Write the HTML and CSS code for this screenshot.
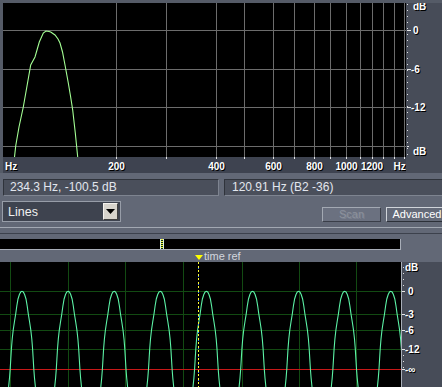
FILE: index.html
```html
<!DOCTYPE html>
<html>
<head>
<meta charset="utf-8">
<link rel="stylesheet" href="styles.css">
</head>
<body>
<div class="app">
  <div class="spectrum">
    <div class="plotcol">
      <svg class="plot" width="403" height="154" viewBox="3 3 403 154">
        <g class="grid">
          <line x1="3" y1="30.5" x2="406" y2="30.5"/>
          <line x1="3" y1="69.5" x2="406" y2="69.5"/>
          <line x1="3" y1="107.5" x2="406" y2="107.5"/>
          <line x1="3" y1="146.5" x2="406" y2="146.5"/>
          <line x1="116.5" y1="3" x2="116.5" y2="157"/>
          <line x1="166.5" y1="3" x2="166.5" y2="157"/>
          <line x1="216.5" y1="3" x2="216.5" y2="157"/>
          <line x1="244.5" y1="3" x2="244.5" y2="157"/>
          <line x1="273.5" y1="3" x2="273.5" y2="157"/>
          <line x1="294.5" y1="3" x2="294.5" y2="157"/>
          <line x1="314.5" y1="3" x2="314.5" y2="157"/>
          <line x1="330.5" y1="3" x2="330.5" y2="157"/>
          <line x1="346.5" y1="3" x2="346.5" y2="157"/>
          <line x1="360.5" y1="3" x2="360.5" y2="157"/>
          <line x1="372.5" y1="3" x2="372.5" y2="157"/>
          <line x1="383.5" y1="3" x2="383.5" y2="157"/>
          <line x1="394.5" y1="3" x2="394.5" y2="157"/>
          <line x1="404.5" y1="3" x2="404.5" y2="157"/>
        </g>
        <polyline class="curve" points="14.5,157 15.7,146 19,127 23.3,107 27,86 30.7,65 35,57 39.3,42 43.3,33 46,31 49,31.5 50.7,32 55,35 58,39 60,43 62.5,52 65,65 68.3,83 70.5,96 72.7,110 75.3,133 77.7,157"/>
      </svg>
      <svg class="xaxis" width="403" height="16" viewBox="3 157 403 16">
        <g class="ticks">
          <line x1="116.5" y1="157" x2="116.5" y2="159"/>
          <line x1="166.5" y1="157" x2="166.5" y2="159"/>
          <line x1="216.5" y1="157" x2="216.5" y2="159"/>
          <line x1="244.5" y1="157" x2="244.5" y2="159"/>
          <line x1="273.5" y1="157" x2="273.5" y2="159"/>
          <line x1="294.5" y1="157" x2="294.5" y2="159"/>
          <line x1="314.5" y1="157" x2="314.5" y2="159"/>
          <line x1="330.5" y1="157" x2="330.5" y2="159"/>
          <line x1="346.5" y1="157" x2="346.5" y2="159"/>
          <line x1="360.5" y1="157" x2="360.5" y2="159"/>
          <line x1="372.5" y1="157" x2="372.5" y2="159"/>
          <line x1="383.5" y1="157" x2="383.5" y2="159"/>
          <line x1="394.5" y1="157" x2="394.5" y2="159"/>
          <line x1="404.5" y1="157" x2="404.5" y2="159"/>
        </g>
        <defs>
          <g id="xl" class="lbl">
            <text x="5" y="170">Hz</text>
            <text x="116.5" y="170" text-anchor="middle">200</text>
            <text x="216.5" y="170" text-anchor="middle">400</text>
            <text x="273.5" y="170" text-anchor="middle">600</text>
            <text x="314.5" y="170" text-anchor="middle">800</text>
            <text x="346.5" y="170" text-anchor="middle">1000</text>
            <text x="372" y="170" text-anchor="middle">1200</text>
            <text x="393.5" y="170">Hz</text>
          </g>
        </defs>
        <use href="#xl" x="1" y="1" fill="#000"/>
        <use href="#xl" fill="#fff"/>
      </svg>
    </div>
    <svg class="yscale" width="36" height="170" viewBox="406 3 36 170">
      <line class="dots" x1="407.5" y1="4" x2="407.5" y2="157"/>
      <g class="ticks">
        <line x1="407" y1="30.5" x2="411" y2="30.5"/>
        <line x1="407" y1="69.5" x2="411" y2="69.5"/>
        <line x1="407" y1="107.5" x2="411" y2="107.5"/>
        <line x1="407" y1="146.5" x2="409" y2="146.5"/>
      </g>
      <defs>
        <g id="yl" class="lbl">
          <text x="413" y="10">dB</text>
          <text x="413" y="34">0</text>
          <text x="411" y="73">-6</text>
          <text x="411" y="111">-12</text>
          <text x="413" y="155">dB</text>
        </g>
      </defs>
      <use href="#yl" x="1" y="1" fill="#000"/>
      <use href="#yl" fill="#fff"/>
    </svg>
  </div>

  <div class="status">
    <div class="field f1">234.3 Hz, -100.5 dB</div>
    <div class="field f2">120.91 Hz (B2 -36)</div>
  </div>

  <div class="controls">
    <div class="select">
      <span class="seltext">Lines</span>
      <span class="drop"><svg width="9" height="5" viewBox="0 0 9 5"><path d="M0 0H9L4.5 5Z" fill="#000"/></svg></span>
    </div>
    <div class="spacer"></div>
    <button class="btn scan" disabled>Scan</button>
    <button class="btn adv">Advanced</button>
  </div>

  <div class="sep"></div>

  <div class="track">
    <div class="marker"></div>
  </div>

  <div class="timeref">
    <span class="tri"></span>
    <span class="trlabel">time ref</span>
  </div>

  <div class="wave">
    <svg class="wplot" width="401" height="125" viewBox="0 261 401 125">
      <g class="ggrid">
        <line x1="10.5" y1="261" x2="10.5" y2="386"/>
        <line x1="68.5" y1="261" x2="68.5" y2="386"/>
        <line x1="125.5" y1="261" x2="125.5" y2="386"/>
        <line x1="183.5" y1="261" x2="183.5" y2="386"/>
        <line x1="242.5" y1="261" x2="242.5" y2="386"/>
        <line x1="299.5" y1="261" x2="299.5" y2="386"/>
        <line x1="356.5" y1="261" x2="356.5" y2="386"/>
        <line x1="0" y1="290.5" x2="401" y2="290.5"/>
        <line x1="0" y1="313.5" x2="401" y2="313.5"/>
        <line x1="0" y1="329.5" x2="401" y2="329.5"/>
        <line x1="0" y1="348.5" x2="401" y2="348.5"/>
      </g>
      <line class="red" x1="0" y1="368.5" x2="401" y2="368.5"/>
      <defs>
        <path id="w" d="M-14.2,396 L-13.3,385 L-12.5,377 L-11.8,368 L-11.2,358 L-10.6,348 L-9.8,338 L-8.8,329 L-7.6,321 L-6.3,313 L-5.2,305 L-4,298 L-2.6,293.5 L-1.3,291 L0,290.3 L1.3,291 L2.6,293.5 L4,298 L5.2,305 L6.3,313 L7.6,321 L8.8,329 L9.8,338 L10.6,348 L11.2,358 L11.8,368 L12.5,377 L13.3,385 L14.2,396"/>
      </defs>
      <g class="wv">
        <use href="#w" x="22"/>
        <use href="#w" x="68.1"/>
        <use href="#w" x="114.2"/>
        <use href="#w" x="160.3"/>
        <use href="#w" x="206.4"/>
        <use href="#w" x="252.5"/>
        <use href="#w" x="298.6"/>
        <use href="#w" x="344.7"/>
        <use href="#w" x="390.8"/>
      </g>
      <line class="tr1" x1="198.5" y1="261" x2="198.5" y2="386"/>
      <line class="tr2" x1="198.5" y1="261" x2="198.5" y2="386"/>
    </svg>
    <svg class="wscale" width="40" height="125" viewBox="402 261 40 125">
      <line class="dots" x1="403.5" y1="266" x2="403.5" y2="290"/>
      <line class="dots" x1="403.5" y1="348" x2="403.5" y2="368"/>
      <g class="ticks">
        <line x1="402" y1="290.5" x2="405" y2="290.5"/>
        <line x1="402" y1="313.5" x2="405" y2="313.5"/>
        <line x1="402" y1="329.5" x2="405" y2="329.5"/>
        <line x1="402" y1="348.5" x2="405" y2="348.5"/>
        <line x1="402" y1="368.5" x2="405" y2="368.5"/>
      </g>
      <defs>
        <g id="wl" class="lbl">
          <text x="405" y="270">dB</text>
          <text x="408" y="294">0</text>
          <text x="405" y="317">-3</text>
          <text x="405" y="333">-6</text>
          <text x="405" y="352">-12</text>
          <text x="405" y="372">-∞</text>
        </g>
      </defs>
      <use href="#wl" x="1" y="1" fill="#000"/>
      <use href="#wl" fill="#fff"/>
    </svg>
  </div>
</div>
</body>
</html>
```

FILE: styles.css
```css
html, body {
  margin: 0;
  padding: 0;
}
body {
  width: 442px;
  height: 387px;
  overflow: hidden;
  background: #626876;
  font-family: "Liberation Sans", Arial, sans-serif;
}
.app {
  width: 442px;
  height: 387px;
  overflow: hidden;
  display: flex;
  flex-direction: column;
}
svg { display: block; }

.spectrum {
  display: flex;
  height: 173px;
  box-sizing: border-box;
  border-top: 3px solid #555b67;
  flex: none;
}
.plotcol {
  display: flex;
  flex-direction: column;
  border-left: 3px solid #555b67;
}
.plot { background: #000; }
.grid line { stroke: #6c6c6c; stroke-width: 1; }
.curve { fill: none; stroke: #a4ff94; stroke-width: 1.1; }
.xaxis { background: #3e4350; }
.ticks line { stroke: #e8e8e8; stroke-width: 1; }
.lbl text {
  font-family: "Liberation Sans", Arial, sans-serif;
  font-weight: bold;
  font-size: 10px;
}
.yscale { background: #474c58; }
.dots { stroke: #e0e0e0; stroke-width: 1; stroke-dasharray: 1 5; }

.status {
  display: flex;
  gap: 5px;
  margin-top: 6px;
  margin-left: 3px;
  margin-right: -6px;
  height: 17px;
  flex: none;
}
.field {
  box-sizing: border-box;
  height: 17px;
  background: #4a4f5b;
  border-top: 1px solid #2f333b;
  border-left: 1px solid #2f333b;
  border-bottom: 1px solid #7e8490;
  border-right: 1px solid #7e8490;
  color: #e2e6ee;
  font-size: 12px;
  line-height: 15px;
  padding-left: 6px;
  white-space: nowrap;
}
.f1 { width: 216px; }
.f2 { flex: 1; padding-left: 7px; }

.controls {
  display: flex;
  align-items: flex-end;
  margin-top: 5px;
  margin-left: 2px;
  margin-right: -6px;
  height: 21px;
  flex: none;
  gap: 5px;
}
.select {
  box-sizing: border-box;
  width: 119px;
  height: 21px;
  border: 1px solid #979da8;
  background: #3e434f;
  display: flex;
  align-items: center;
  padding: 1px 2px 1px 5px;
  align-self: stretch;
}
.seltext {
  flex: 1;
  color: #f0f0f0;
  font-size: 12.5px;
}
.drop {
  box-sizing: border-box;
  width: 15px;
  height: 17px;
  background: #d6d3cc;
  border-top: 1px solid #f4f2ee;
  border-left: 1px solid #f4f2ee;
  border-right: 1px solid #404040;
  border-bottom: 1px solid #404040;
  display: flex;
  align-items: center;
  justify-content: center;
}
.spacer { flex: 1; }
.btn {
  box-sizing: border-box;
  height: 15px;
  padding: 0;
  margin: 0;
  font-family: "Liberation Sans", Arial, sans-serif;
  font-size: 11px;
  line-height: 13px;
  border-style: solid;
  border-width: 1px;
}
.scan {
  width: 59px;
  background: #6b7180;
  border-color: #a3a9b3 #3a3e48 #3a3e48 #a3a9b3;
  color: #8d929c;
  text-shadow: 1px 1px 0 #7c8290;
}
.adv {
  width: 62px;
  background: #646a78;
  border-color: #d0d4da #2c3038 #2c3038 #d0d4da;
  color: #ffffff;
}

.sep {
  flex: none;
  margin-top: 5px;
  height: 5px;
  border-top: 1px solid #a2a8b2;
  border-bottom: 1px solid #3c414c;
}
.track {
  flex: none;
  margin-top: 5px;
  width: 400px;
  height: 10px;
  background: #000;
  border-right: 1px solid #a8aeb8;
  border-bottom: 1px solid #a8aeb8;
  display: flex;
}
.marker {
  margin-left: 160px;
  box-sizing: border-box;
  width: 4px;
  height: 10px;
  border-left: 1px solid #d8f4e8;
  border-right: 1px solid #d8f4e8;
  background: repeating-linear-gradient(to bottom, #f0f040 0 1px, #0c3010 1px 2px);
}
.timeref {
  flex: none;
  height: 12px;
  display: flex;
  align-items: flex-end;
  padding-left: 195px;
}
.tri {
  width: 0;
  height: 0;
  border-left: 4px solid transparent;
  border-right: 4px solid transparent;
  border-top: 5px solid #ffff00;
  margin-bottom: 2px;
}
.trlabel {
  margin-left: 1px;
  color: #d2d6de;
  font-size: 11px;
  line-height: 12px;
}
.wave {
  flex: none;
  display: flex;
  height: 126px;
  box-sizing: border-box;
  border-bottom: 1px solid #b0b4bc;
}
.wplot { background: #000; }
.ggrid line { stroke: #124a12; stroke-width: 1; }
.red { stroke: #c81818; stroke-width: 1; }
.wv use { fill: none; stroke: #5cf2a6; stroke-width: 1.1; }
.tr1 { stroke: #ffff30; stroke-width: 1; stroke-dasharray: 2 2; }
.tr2 { stroke: #4080ff; stroke-width: 1; stroke-dasharray: 1 7; stroke-dashoffset: 2; }
.wscale {
  background: #474c58;
  border-left: 1px solid #a8aeb8;
}
```
